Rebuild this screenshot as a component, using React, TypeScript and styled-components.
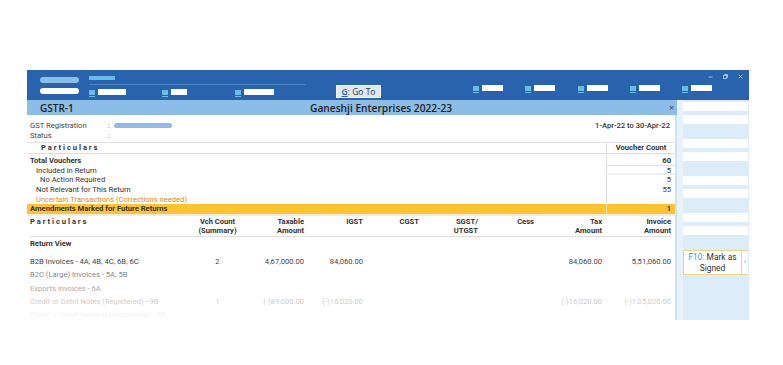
import React from 'react';
import styled, { createGlobalStyle } from 'styled-components';

const GlobalStyle = createGlobalStyle`
  html, body { margin: 0; padding: 0; background: #ffffff; }
  body { font-family: Roboto, "Liberation Sans", sans-serif; color: #333; }
`;

const Page = styled.div`
  padding: 70px 0 0 27px;
`;

const Window = styled.div`
  width: 722px;
  height: 250px;
  display: flex;
  flex-direction: column;
  overflow: hidden;
`;

/* ---------- top bar ---------- */

const TopBar = styled.div`
  height: 30px;
  flex: 0 0 30px;
  display: flex;
  background: #2a63ad;
`;

const LogoBlock = styled.div`
  width: 49px;
  padding: 7px 0 0 13px;
  display: flex;
  flex-direction: column;
  gap: 5px;
`;

const Pill = styled.div<{ $color: string }>`
  width: 39px;
  height: 6px;
  border-radius: 3px;
  background: ${(p) => p.$color};
`;

const NavBlock = styled.div`
  width: 247px;
  padding-top: 6px;
  display: flex;
  flex-direction: column;
`;

const CompanyBar = styled.div`
  width: 26px;
  height: 4px;
  background: #6cbce8;
`;

const Rule = styled.div`
  width: 217px;
  height: 1px;
  margin-top: 4px;
  background: #4d86c6;
`;

const MenuRow = styled.div<{ $offset?: number }>`
  display: flex;
  margin-top: 4px;
  padding-left: ${(p) => p.$offset || 0}px;
`;

const MenuItem = styled.div<{ $width: number }>`
  width: ${(p) => p.$width}px;
  display: flex;
  gap: 3px;
`;

const KeySquare = styled.div`
  width: 6px;
  height: 5px;
  margin-top: 1px;
  background: #6cbce8;
  position: relative;
  &::after {
    content: '';
    position: absolute;
    left: 0;
    right: 0;
    bottom: -2px;
    height: 1px;
    background: #6cbce8;
  }
`;

const MenuLabel = styled.div<{ $width: number }>`
  width: ${(p) => p.$width}px;
  height: 6px;
  background: #ffffff;
`;

const GoToButton = styled.div`
  margin-top: 15px;
  width: 45px;
  height: 13px;
  box-sizing: border-box;
  border: 1px solid #f4f8fc;
  background: #dde8f5;
  font-family: "Open Sans", "Noto Sans", sans-serif;
  font-size: 8.5px;
  line-height: 11px;
  color: #333;
  text-align: center;
  & u {
    color: #2a63ad;
    font-weight: 600;
  }
`;

const RightBlock = styled.div`
  flex: 1;
  display: flex;
  flex-direction: column;
`;

const ControlsRow = styled.div`
  height: 9px;
  padding: 2px 6px 0 0;
  display: flex;
  justify-content: flex-end;
  align-items: center;
  gap: 10px;
`;

/* ---------- body ---------- */

const Body = styled.div`
  flex: 1;
  display: flex;
  min-height: 0;
`;

const Main = styled.div`
  width: 650px;
  display: flex;
  flex-direction: column;
`;

const SubHeader = styled.div`
  height: 15px;
  flex: 0 0 15px;
  display: flex;
  align-items: center;
  background: #8bbde6;
  font-family: "Open Sans", "Noto Sans", sans-serif;
  font-weight: 600;
  color: #222;
`;

const ReportName = styled.div`
  flex: 0 0 283px;
  padding-left: 13px;
  box-sizing: border-box;
  font-size: 10px;
`;

const CompanyTitle = styled.div`
  font-size: 10.2px;
  flex: 1;
`;

const CloseMark = styled.div`
  width: 8px;
  font-size: 9px;
  color: #444;
  font-weight: 400;
`;

const Content = styled.div`
  flex: 1;
  background: #ffffff;
  border-right: 2px solid #cfe2f4;
  overflow: hidden;
  font-size: 7.6px;
`;

const InfoBlock = styled.div`
  padding: 5px 5px 2px 3px;
  display: grid;
  grid-template-columns: 78px 1fr auto;
  grid-auto-rows: 10px;
  align-items: center;
  border-bottom: 1px solid #dedede;
  color: #444;
`;

const Colon = styled.span`
  margin-right: 4px;
`;

const BlurredValue = styled.span`
  display: inline-block;
  width: 58px;
  height: 5px;
  border-radius: 3px;
  background: #8dbde6;
  vertical-align: middle;
`;

const Period = styled.div`
  font-weight: 500;
  color: #333;
`;

const SummaryGrid = styled.div`
  display: grid;
  grid-template-columns: 1fr 69px;
  border-bottom: 2px solid #ededed;
`;

const SpacedHead = styled.div<{ $pad: number }>`
  padding-left: ${(p) => p.$pad}px;
  font-weight: 700;
  letter-spacing: 1.9px;
  color: #333;
`;

const HeadCell = styled.div`
  height: 10px;
  line-height: 10px;
  border-bottom: 1px solid #dedede;
`;

const CountHead = styled(HeadCell)`
  border-left: 1px solid #dedede;
  text-align: center;
  font-weight: 700;
`;

const LabelCell = styled.div<{ $indent: number; $bold?: boolean; $tone?: string; $hl?: boolean }>`
  height: 9.7px;
  line-height: 9.7px;
  padding-left: ${(p) => p.$indent}px;
  font-weight: ${(p) => (p.$bold ? 700 : 400)};
  color: ${(p) => p.$tone || '#333'};
  background: ${(p) => (p.$hl ? '#fdc42d' : 'transparent')};
`;

const CountCell = styled.div<{ $bold?: boolean; $hl?: boolean; $line?: string }>`
  height: 9.7px;
  line-height: 9.7px;
  box-sizing: border-box;
  padding-right: 4px;
  text-align: right;
  border-left: 1px solid ${(p) => (p.$hl ? '#fde7a6' : '#dedede')};
  border-bottom: ${(p) => p.$line || 'none'};
  font-weight: ${(p) => (p.$bold ? 700 : 400)};
  color: #333;
  background: ${(p) => (p.$hl ? '#fdc42d' : 'transparent')};
`;

const Gap = styled.div`
  height: 2px;
  grid-column: 1 / -1;
`;

const ReturnGrid = styled.div`
  padding-left: 3px;
  display: grid;
  grid-template-columns: 160px 55px 59px 59px 56px 59px 56px 68px 69px;
`;

const ColHead = styled.div<{ $align: string }>`
  height: 19px;
  padding-top: 1px;
  line-height: 9px;
  text-align: ${(p) => p.$align};
  font-weight: 700;
  color: #333;
  border-bottom: 1px solid #dedede;
`;

const SectionTitle = styled.div`
  grid-column: 1 / -1;
  height: 13px;
  line-height: 13px;
  margin-bottom: 5px;
  font-weight: 700;
  color: #333;
`;

const DataCell = styled.div<{ $align: string; $tone: string }>`
  height: 13.3px;
  line-height: 13.3px;
  text-align: ${(p) => p.$align};
  color: ${(p) => p.$tone};
  white-space: nowrap;
`;

/* ---------- right button panel ---------- */

const SidePanel = styled.div`
  flex: 1;
  background: #ddecf9;
  border-left: 6px solid #e8f2fc;
  padding-top: 2px;
  display: flex;
  flex-direction: column;
  gap: 15px;
`;

const ButtonPair = styled.div`
  display: flex;
  flex-direction: column;
  gap: 4px;
`;

const BlankButton = styled.div`
  width: 65px;
  height: 9px;
  background: #ffffff;
`;

const ActionButton = styled.div`
  width: 65px;
  height: 25px;
  box-sizing: border-box;
  display: flex;
  background: #ffffff;
  border: 1px solid #f2d47e;
  border-right: none;
`;

const ActionText = styled.div`
  flex: 1;
  border-right: 1px solid #c5d6ea;
  text-align: center;
  font-size: 8.4px;
  line-height: 11px;
  padding-top: 1px;
  color: #333;
  & b {
    font-weight: 400;
    color: #3d8fd9;
  }
`;

const ActionArrow = styled.div`
  width: 6px;
  text-align: center;
  font-size: 7px;
  line-height: 23px;
  color: #3d8fd9;
`;

type Row = { label: string; vals: string[]; tone: string };

const summaryRows: { label: string; count: string; indent: number; bold?: boolean; tone?: string; line?: string }[] = [
  { label: 'Total Vouchers', count: '60', indent: 3, bold: true, line: '1px solid #e2e2e2' },
  { label: 'Included in Return', count: '5', indent: 9, line: '2px solid #efefef' },
  { label: 'No Action Required', count: '5', indent: 13 },
  { label: 'Not Relevant for This Return', count: '55', indent: 9 },
  { label: 'Uncertain Transactions (Corrections needed)', count: '', indent: 9, tone: '#d48b18' },
];

const columns = [
  { head: ['P a r t i c u l a r s'], align: 'left' },
  { head: ['Vch Count', '(Summary)'], align: 'center' },
  { head: ['Taxable', 'Amount'], align: 'right' },
  { head: ['IGST'], align: 'right' },
  { head: ['CGST'], align: 'right' },
  { head: ['SGST/', 'UTGST'], align: 'right' },
  { head: ['Cess'], align: 'right' },
  { head: ['Tax', 'Amount'], align: 'right' },
  { head: ['Invoice', 'Amount'], align: 'right' },
];

const returnRows: Row[] = [
  { label: 'B2B Invoices - 4A, 4B, 4C, 6B, 6C', vals: ['2', '4,67,000.00', '84,060.00', '', '', '', '84,060.00', '5,51,060.00'], tone: '#444' },
  { label: 'B2C (Large) Invoices - 5A, 5B', vals: ['', '', '', '', '', '', '', ''], tone: '#8a8a8a' },
  { label: 'Exports Invoices - 6A', vals: ['', '', '', '', '', '', '', ''], tone: '#ababab' },
  { label: 'Credit or Debit Notes (Registered) - 9B', vals: ['1', '(-)89,000.00', '(-)16,020.00', '', '', '', '(-)16,020.00', '(-)1,05,020.00'], tone: '#cdcdcd' },
  { label: 'Credit or Debit Notes (Unregistered) - 9B', vals: ['', '', '', '', '', '', '', ''], tone: '#f4f4f4' },
];

const WinIcon = ({ kind }: { kind: 'min' | 'max' | 'close' }) => (
  <svg width="5" height="5" viewBox="0 0 5 5" fill="none" stroke="#a8c6ea" strokeWidth="0.9">
    {kind === 'min' && <path d="M0.5 3h4" />}
    {kind === 'max' && (
      <>
        <rect x="0.5" y="1.5" width="3" height="3" />
        <path d="M1.5 1.5V0.5h3v3h-1" />
      </>
    )}
    {kind === 'close' && <path d="M0.7 0.7l3.6 3.6M4.3 0.7l-3.6 3.6" />}
  </svg>
);

const leftMenu = [
  { w: 73, label: 28 },
  { w: 73, label: 16 },
  { w: 73, label: 30 },
];

const rightMenu = [21, 21, 21, 21, 21];

export default function App() {
  return (
    <Page>
      <GlobalStyle />
      <Window>
        <TopBar>
          <LogoBlock>
            <Pill $color="#8bbde6" />
            <Pill $color="#ffffff" />
          </LogoBlock>
          <NavBlock>
            <CompanyBar />
            <Rule />
            <MenuRow>
              {leftMenu.map((m, i) => (
                <MenuItem key={i} $width={m.w}>
                  <KeySquare />
                  <MenuLabel $width={m.label} />
                </MenuItem>
              ))}
            </MenuRow>
          </NavBlock>
          <GoToButton>
            <u>G</u>: Go To
          </GoToButton>
          <RightBlock>
            <ControlsRow>
              <WinIcon kind="min" />
              <WinIcon kind="max" />
              <WinIcon kind="close" />
            </ControlsRow>
            <MenuRow $offset={92}>
              {rightMenu.map((w, i) => (
                <MenuItem key={i} $width={52.3}>
                  <KeySquare />
                  <MenuLabel $width={w} />
                </MenuItem>
              ))}
            </MenuRow>
          </RightBlock>
        </TopBar>

        <Body>
          <Main>
            <SubHeader>
              <ReportName>GSTR-1</ReportName>
              <CompanyTitle>Ganeshji Enterprises 2022-23</CompanyTitle>
              <CloseMark>×</CloseMark>
            </SubHeader>
            <Content>
              <InfoBlock>
                <div>GST Registration</div>
                <div>
                  <Colon>:</Colon>
                  <BlurredValue />
                </div>
                <Period>1-Apr-22 to 30-Apr-22</Period>
                <div>Status</div>
                <div>
                  <Colon>:</Colon>
                </div>
                <div />
              </InfoBlock>

              <SummaryGrid>
                <HeadCell>
                  <SpacedHead $pad={14}>Particulars</SpacedHead>
                </HeadCell>
                <CountHead>Voucher Count</CountHead>
                <Gap />
                {summaryRows.map((r) => (
                  <React.Fragment key={r.label}>
                    <LabelCell $indent={r.indent} $bold={r.bold} $tone={r.tone}>
                      {r.label}
                    </LabelCell>
                    <CountCell $bold={r.bold} $line={r.line}>
                      {r.count}
                    </CountCell>
                  </React.Fragment>
                ))}
                <LabelCell $indent={3} $bold $hl>
                  Amendments Marked for Future Returns
                </LabelCell>
                <CountCell $bold $hl>
                  1
                </CountCell>
              </SummaryGrid>

              <ReturnGrid>
                {columns.map((c, i) => (
                  <ColHead key={i} $align={c.align}>
                    {i === 0 ? (
                      <SpacedHead $pad={0}>Particulars</SpacedHead>
                    ) : (
                      c.head.map((h) => <div key={h}>{h}</div>)
                    )}
                  </ColHead>
                ))}
                <SectionTitle>Return View</SectionTitle>
                {returnRows.map((r) => (
                  <React.Fragment key={r.label}>
                    <DataCell $align="left" $tone={r.tone}>
                      {r.label}
                    </DataCell>
                    {r.vals.map((v, i) => (
                      <DataCell key={i} $align={i === 0 ? 'center' : 'right'} $tone={r.tone}>
                        {v}
                      </DataCell>
                    ))}
                  </React.Fragment>
                ))}
              </ReturnGrid>
            </Content>
          </Main>

          <SidePanel>
            <ButtonPair>
              <BlankButton />
              <BlankButton />
            </ButtonPair>
            <ButtonPair>
              <BlankButton />
              <BlankButton />
            </ButtonPair>
            <ButtonPair>
              <BlankButton />
              <BlankButton />
            </ButtonPair>
            <ButtonPair>
              <BlankButton />
              <BlankButton />
            </ButtonPair>
            <ActionButton>
              <ActionText>
                <b>F10:</b> Mark as
                <br />
                Signed
              </ActionText>
              <ActionArrow>‹</ActionArrow>
            </ActionButton>
          </SidePanel>
        </Body>
      </Window>
    </Page>
  );
}
